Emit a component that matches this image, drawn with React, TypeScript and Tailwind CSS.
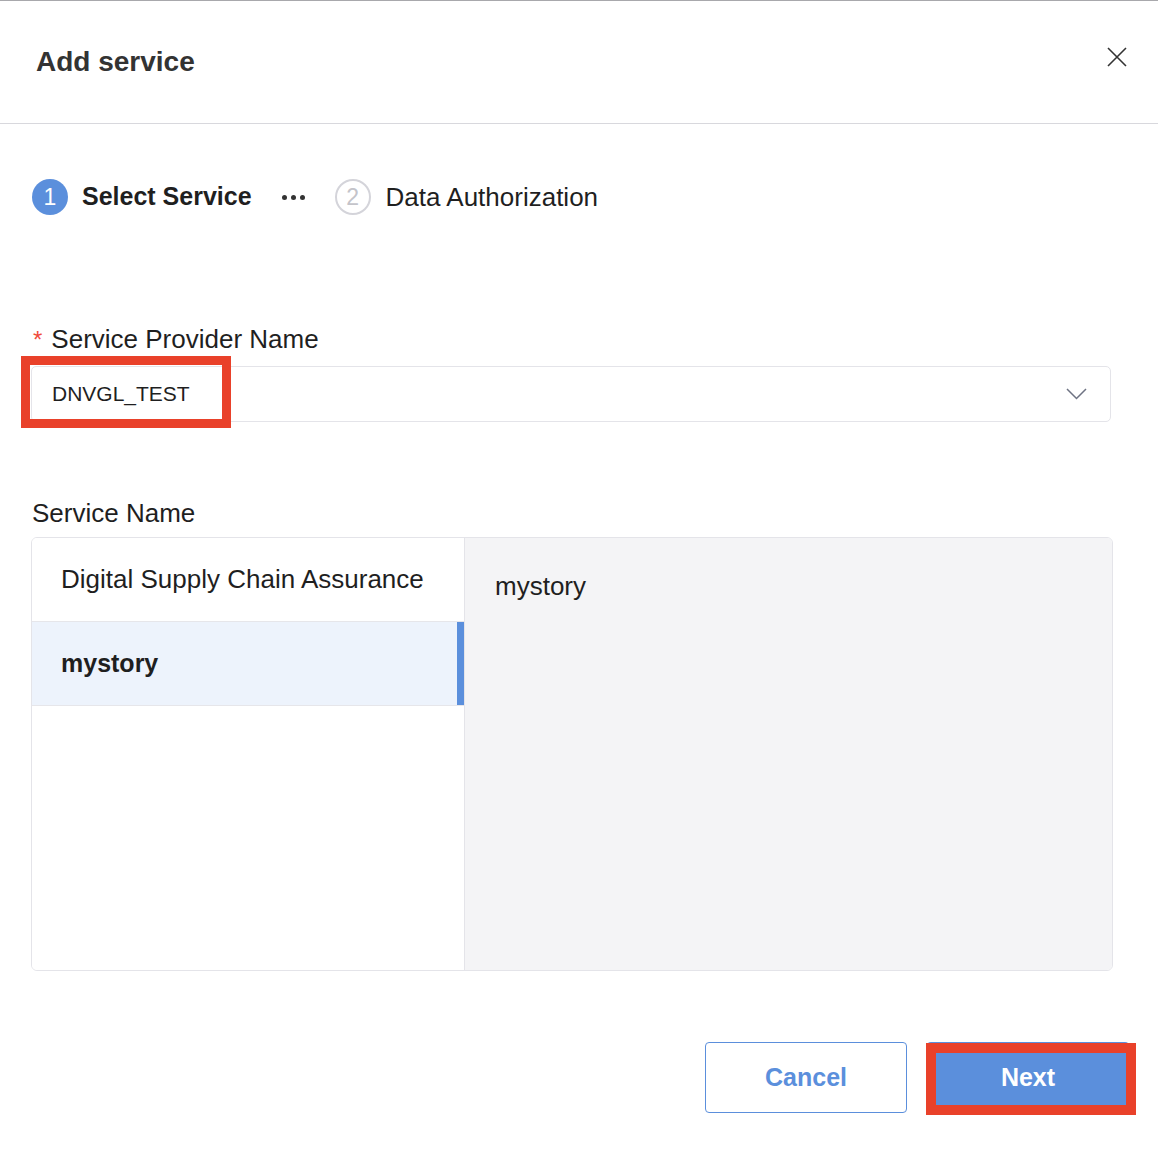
import React from 'react';

const font = { fontFamily: '"Liberation Sans", Arial, sans-serif' };

const services = [
  { id: 'dsca', label: 'Digital Supply Chain Assurance' },
  { id: 'mystory', label: 'mystory' },
];

// Thin close cross
const CloseIcon = () => (
  <svg width="20" height="20" viewBox="0 0 20 20" fill="none">
    <path d="M1 1 L19 19 M19 1 L1 19" stroke="#333" strokeWidth="1.6" />
  </svg>
);

const Chevron = () => (
  <svg width="21" height="12" viewBox="0 0 21 12" fill="none">
    <path d="M1 1 L10.5 10.5 L20 1" stroke="#6e7383" strokeWidth="1.5" />
  </svg>
);

export default function App() {
  const selected = 'mystory';

  return (
    <div className="w-full h-[1149px] bg-white border-t border-[#a8a8ac] text-[#1f1f1f]" style={font}>
      {/* Header */}
      <header className="h-[123px] flex items-center justify-between pl-[36px] pr-[31px] border-b border-[#d8d8dd]">
        <h1 className="text-[28px] font-bold text-[#333]">Add service</h1>
        <button className="p-0 mb-[11px]">
          <CloseIcon />
        </button>
      </header>

      <div className="pl-[31px]">
        {/* Steps */}
        <div className="flex items-center mt-[55px] h-[36px]">
          <div className="w-[36px] h-[36px] rounded-full bg-[#5b8fdc] text-white flex items-center justify-center text-[23px] ml-[1px]">
            1
          </div>
          <span className="ml-[14px] text-[25px] font-bold">Select Service</span>
          <div className="flex gap-[4px] mx-[30px]">
            <span className="w-[5px] h-[5px] rounded-full bg-[#333]" />
            <span className="w-[5px] h-[5px] rounded-full bg-[#333]" />
            <span className="w-[5px] h-[5px] rounded-full bg-[#333]" />
          </div>
          <div className="w-[36px] h-[36px] rounded-full border-2 border-[#d4d4da] text-[#c4c4ca] flex items-center justify-center text-[23px]">
            2
          </div>
          <span className="ml-[15px] text-[26px]">Data Authorization</span>
        </div>

        {/* Service provider */}
        <label className="block mt-[110px] leading-[28px] text-[26px]">
          <span className="text-[#f04b3c] text-[24px] mr-[9px] ml-[2px]">*</span>Service Provider Name
        </label>
        <div className="relative mt-[12px] w-[1080px] h-[56px] border border-[#e4e4e9] rounded-[5px] flex items-center justify-between pl-[20px] pr-[23px]">
          <span className="text-[21px]">DNVGL_TEST</span>
          <Chevron />
          <div className="absolute left-[-11px] top-[-11px] w-[210px] h-[72px] border-[9px] border-[#e9412a]" />
        </div>

        {/* Service name */}
        <div className="mt-[77px] leading-[28px] text-[26px] ml-[1px]">Service Name</div>
        <div className="mt-[10px] w-[1082px] h-[434px] border border-[#e4e4e9] rounded-[6px] flex overflow-hidden">
          <div className="w-[433px] border-r border-[#e4e4e9] bg-white">
            {services.map((s) => {
              const active = s.id === selected;
              return (
                <div
                  key={s.id}
                  className={`relative h-[84px] flex items-center pl-[29px] border-b border-[#e6e6ea] ${
                    active ? 'bg-[#edf3fc] font-bold text-[25px]' : 'text-[26px]'
                  }`}
                >
                  {s.label}
                  {active && <span className="absolute right-0 top-0 bottom-0 w-[7px] bg-[#5b8fdc]" />}
                </div>
              );
            })}
          </div>
          <div className="flex-1 bg-[#f4f4f6] pl-[30px] pt-[34px] text-[26px] leading-[28px]">mystory</div>
        </div>
      </div>

      {/* Footer buttons */}
      <div className="flex justify-end gap-[20px] pr-[29px] mt-[71px]">
        <button className="w-[202px] h-[71px] border border-[#5b8fdc] rounded-[4px] text-[#5b8fdc] text-[25px] font-bold">
          Cancel
        </button>
        <div className="relative">
          <button className="w-[202px] h-[71px] bg-[#5b8fdc] rounded-[4px] text-white text-[25px] font-bold">
            Next
          </button>
          <div className="absolute left-[-1px] top-[1px] w-[210px] h-[72px] border-[10px] border-[#e9412a]" />
        </div>
      </div>
    </div>
  );
}
